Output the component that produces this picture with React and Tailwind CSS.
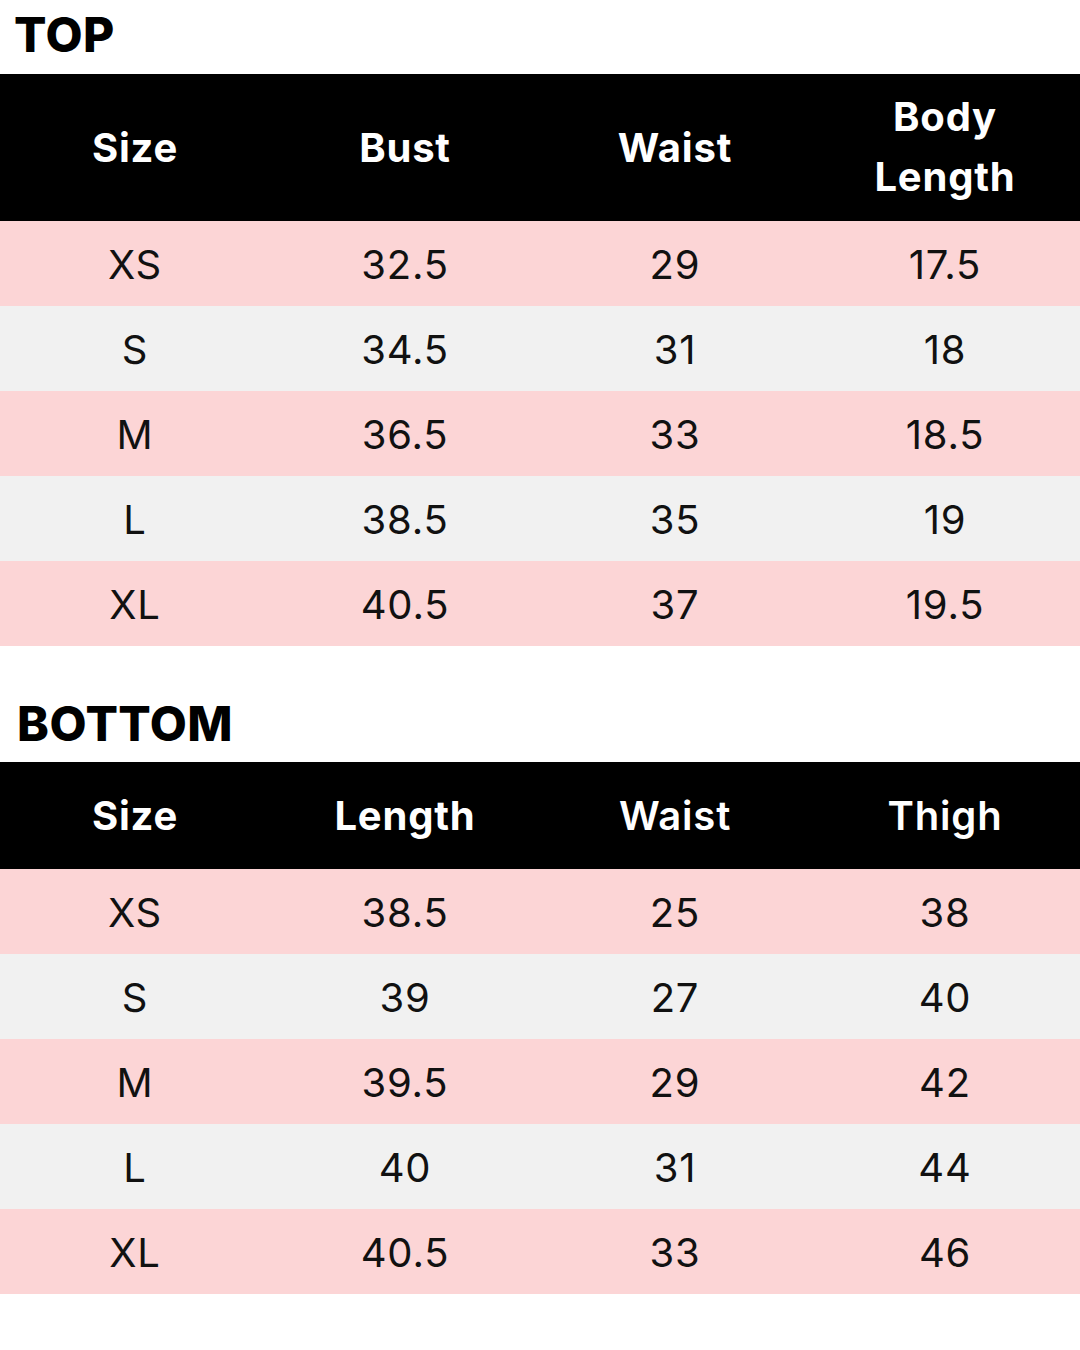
const top = {
  head: [
    { label: 'Size' },
    { label: 'Bust' },
    { label: 'Waist' },
    { label: 'Body Length', two: true },
  ],
  rows: [
    ['XS', '32.5', '29', '17.5'],
    ['S', '34.5', '31', '18'],
    ['M', '36.5', '33', '18.5'],
    ['L', '38.5', '35', '19'],
    ['XL', '40.5', '37', '19.5'],
  ],
}

const bottom = {
  head: [
    { label: 'Size' },
    { label: 'Length' },
    { label: 'Waist', light: true },
    { label: 'Thigh', light: true },
  ],
  rows: [
    ['XS', '38.5', '25', '38'],
    ['S', '39', '27', '40'],
    ['M', '39.5', '29', '42'],
    ['L', '40', '31', '44'],
    ['XL', '40.5', '33', '46'],
  ],
}

function Table({ data, headH }) {
  return (
    <div>
      <div className={`grid grid-cols-4 bg-black text-white ${headH}`}>
        {data.head.map((h) => (
          <div
            key={h.label}
            className={`flex items-center justify-center text-center text-[40px] leading-[60px] tracking-[0.02em] ${h.light ? 'font-semibold' : 'font-bold'}`}
          >
            {h.two ? (
              <span className="w-[180px] pb-[2px]">{h.label}</span>
            ) : (
              h.label
            )}
          </div>
        ))}
      </div>
      {data.rows.map((r, i) => (
        <div
          key={r[0]}
          className={`grid h-[85px] grid-cols-4 ${i % 2 === 0 ? 'bg-[#fcd5d6]' : 'bg-[#f1f1f1]'}`}
        >
          {r.map((c, j) => (
            <div key={j} className="flex items-center justify-center pt-[2px] text-[40px] font-normal tracking-[0.02em] text-[#111]">
              {c}
            </div>
          ))}
        </div>
      ))}
    </div>
  )
}

export default function App() {
  return (
    <div className="h-[1350px] w-[1080px] bg-white font-['Inter',sans-serif] text-black">
      <div className="flex h-[74px] items-center pl-[14px] pb-[4px]">
        <h1 className="text-[48px] font-extrabold leading-none tracking-[0.01em]">TOP</h1>
      </div>
      <Table data={top} headH="h-[147px]" />
      <div className="flex h-[116px] items-end pl-[17px] pb-[14px]">
        <h1 className="text-[48px] font-extrabold leading-none tracking-[0.01em]">BOTTOM</h1>
      </div>
      <Table data={bottom} headH="h-[107px]" />
    </div>
  )
}
